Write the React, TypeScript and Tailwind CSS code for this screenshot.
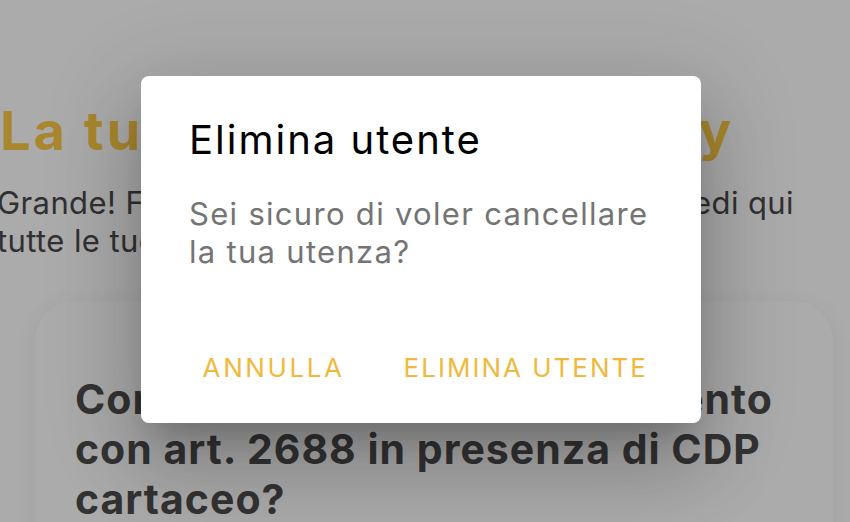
const font = { fontFamily: 'Inter, "Open Sans", sans-serif' };

export default function App() {
  return (
    <div className="relative w-[850px] h-[522px] overflow-hidden bg-white" style={font}>
      {/* page behind the dialog */}
      <div className="pt-[99px]">
        <h1 className="whitespace-nowrap text-[54px] leading-[64px] font-bold tracking-[3px] text-[#fcc945]">
          La tua area dati e privacy
        </h1>
        <p className="mt-[21px] -ml-[3px] whitespace-nowrap text-[31px] leading-[38px] tracking-[0.4px] text-[#4a4a4a]">
          Grande! Fai il tuo primo acquisto online e poi vedi qui
          <br />
          tutte le tue pratiche in corso.
        </p>
        <div className="mt-[41px] ml-[35px] mr-[17px] h-[300px] rounded-[40px] bg-white pl-[40px] pt-[73px] shadow-[0_4px_24px_rgba(0,0,0,0.06)]">
          <p className="whitespace-nowrap text-[41px] leading-[50px] font-bold tracking-[1px] text-[#4d4d4d]">
            Come posso gestire il pagamento
            <br />
            con art. 2688 in presenza di CDP
            <br />
            cartaceo?
          </p>
        </div>
      </div>

      {/* barrier */}
      <div className="absolute inset-0 bg-black/[0.33]" />

      {/* dialog */}
      <div className="absolute left-[141px] top-[76px] w-[560px] h-[347px] rounded-[8px] bg-white pl-[48px] pr-[53px] pt-[40px] shadow-[0_48px_76px_6px_rgba(0,0,0,0.14),0_18px_92px_16px_rgba(0,0,0,0.12),0_22px_30px_-14px_rgba(0,0,0,0.2)]">
        <h2 className="whitespace-nowrap text-[40px] leading-[48px] tracking-[2px] text-black">Elimina utente</h2>
        <p className="mt-[31px] whitespace-nowrap text-[31px] leading-[38px] tracking-[1.3px] text-[#747474]">
          Sei sicuro di voler cancellare
          <br />
          la tua utenza?
        </p>
        <div className="mt-[81px] flex justify-end gap-[59px]">
          <button className="text-[26px] leading-[32px] tracking-[2.6px] text-[#f0b93e]">ANNULLA</button>
          <button className="text-[26px] leading-[32px] tracking-[2px] text-[#f0b93e]">ELIMINA UTENTE</button>
        </div>
      </div>
    </div>
  );
}
